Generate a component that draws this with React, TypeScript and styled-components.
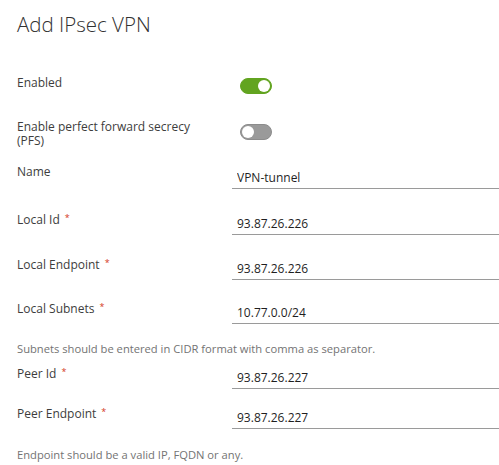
import React from "react";
import styled, { createGlobalStyle } from "styled-components";

const GlobalStyle = createGlobalStyle`
  html, body {
    margin: 0;
    padding: 0;
    background: #ffffff;
  }
  body {
    font-family: "Open Sans", "Liberation Sans", sans-serif;
    color: #454545;
  }
`;

const Page = styled.div`
  width: 499px;
  height: 465px;
  overflow: hidden;
  padding-left: 17px;
  box-sizing: border-box;
`;

const Title = styled.h3`
  margin: 0;
  padding-top: 11px;
  font-size: 20.5px;
  line-height: 26px;
  font-weight: 300;
  color: #313131;
`;

const Form = styled.form`
  display: flex;
  flex-direction: column;
  margin-top: 37px;
`;

const Row = styled.div<{ $top?: number }>`
  display: grid;
  grid-template-columns: 215px 1fr;
  align-items: start;
  margin-top: ${(p) => p.$top ?? 0}px;
`;

const Label = styled.label`
  font-size: 12px;
  line-height: 14px;
  color: #3d3d3d;
  padding-top: 2px;
`;

const Required = styled.span`
  color: #d4381d;
  font-size: 9px;
  margin-left: 5px;
  vertical-align: 3px;
`;

const Toggle = styled.span<{ $on?: boolean; $top: number }>`
  position: relative;
  display: block;
  width: 32px;
  height: 16px;
  margin-left: 8px;
  margin-top: ${(p) => p.$top}px;
  border-radius: 8px;
  box-sizing: border-box;
  background: ${(p) => (p.$on ? "#62a420" : "#9a9a9a")};
  border: 1px solid ${(p) => (p.$on ? "#62a420" : "#8c8c8c")};

  &::after {
    content: "";
    position: absolute;
    top: 1px;
    left: ${(p) => (p.$on ? "17px" : "1px")};
    width: 12px;
    height: 12px;
    border-radius: 50%;
    background: #ffffff;
  }
`;

const Input = styled.input`
  display: block;
  width: 100%;
  height: 23px;
  box-sizing: border-box;
  margin: 3px 0 0;
  padding: 0 5px;
  border: none;
  border-bottom: 1px solid #9a9a9a;
  outline: none;
  background: transparent;
  font-family: "Open Sans", "Liberation Sans", sans-serif;
  font-size: 12px;
  color: #1f1f1f;
`;

const Helper = styled.p<{ $top?: number }>`
  margin: ${(p) => p.$top ?? 0}px 0 0;
  font-size: 11.2px;
  line-height: 14px;
  color: #737373;
`;

const fields = [
  { label: "Name", value: "VPN-tunnel", required: false, top: 15 },
  { label: "Local Id", value: "93.87.26.226", required: true, top: 20 },
  { label: "Local Endpoint", value: "93.87.26.226", required: true, top: 19 },
  { label: "Local Subnets", value: "10.77.0.0/24", required: true, top: 18 },
];

export default function App() {
  return (
    <Page>
      <GlobalStyle />
      <Title>Add IPsec VPN</Title>
      <Form>
        <Row>
          <Label>Enabled</Label>
          <Toggle $on $top={4} />
        </Row>
        <Row $top={24}>
          <Label>
            Enable perfect forward secrecy
            <br />
            (PFS)
          </Label>
          <Toggle $top={6} />
        </Row>
        {fields.map((f) => (
          <Row key={f.label} $top={f.top}>
            <Label>
              {f.label}
              {f.required && <Required>*</Required>}
            </Label>
            <Input defaultValue={f.value} />
          </Row>
        ))}
        <Helper $top={18}>
          Subnets should be entered in CIDR format with comma as separator.
        </Helper>
        <Row $top={7}>
          <Label>
            Peer Id<Required>*</Required>
          </Label>
          <Input defaultValue="93.87.26.227" />
        </Row>
        <Row $top={14}>
          <Label>
            Peer Endpoint<Required>*</Required>
          </Label>
          <Input defaultValue="93.87.26.227" />
        </Row>
        <Helper $top={19}>Endpoint should be a valid IP, FQDN or any.</Helper>
      </Form>
    </Page>
  );
}
